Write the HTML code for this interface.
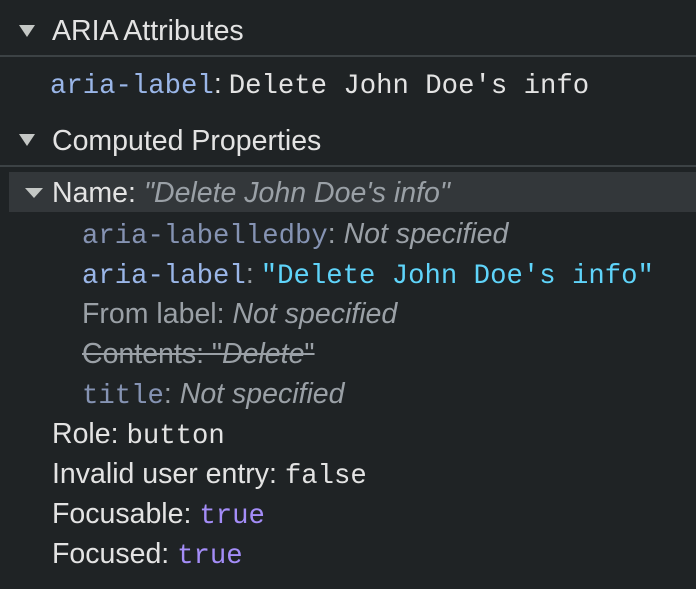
<!DOCTYPE html>
<html><head><style>
body{margin:0;width:696px;height:589px;background:#1f2325;overflow:hidden;font-family:"Liberation Sans",sans-serif;color:#e3e3e3;font-size:28.5px}
.r{position:absolute;left:0;right:0;height:40px;line-height:40px;white-space:nowrap}
.m{font-family:"Liberation Mono",monospace;font-size:27.3px}
.v{margin-left:7px}
.tri{position:absolute;width:0;height:0;border-left:8px solid transparent;border-right:8px solid transparent;border-top:12px solid #c4c7c5}
.sep{position:absolute;left:0;right:0;height:2px;background:#3c4245}
.k{color:#9ab6e8}.kd{color:#8593b3}.g{color:#9aa0a6}.c{color:#5fd4fa}.p{color:#a48df8}
i{font-style:italic}
</style></head><body>
<div class="tri" style="left:19px;top:25px"></div>
<div class="r" style="top:11px;left:52px">ARIA Attributes</div>
<div class="sep" style="top:55px"></div>
<div class="r" style="top:64px;left:50px"><span class="m k">aria-label</span>:<span class="m v">Delete John Doe's info</span></div>
<div class="tri" style="left:19px;top:134px"></div>
<div class="r" style="top:121px;left:52px">Computed Properties</div>
<div class="sep" style="top:165px"></div>
<div style="position:absolute;left:9px;right:0;top:172px;height:40px;background:#33373a"></div>
<div class="tri" style="left:25px;top:188px;border-left-width:9px;border-right-width:9px;border-top-width:10px"></div>
<div class="r" style="top:173px;left:52px">Name: <i class="g">"Delete John Doe's info"</i></div>
<div class="r" style="top:214px;left:82px"><span class="m kd">aria-labelledby</span><span class="g">: <i>Not specified</i></span></div>
<div class="r" style="top:254px;left:82px"><span class="m k">aria-label</span><span class="g">:</span><span class="m c v">"Delete John Doe's info"</span></div>
<div class="r g" style="top:294px;left:82px">From label: <i>Not specified</i></div>
<div class="r g" style="top:334px;left:82px"><s>Contents: "<i>Delete</i>"</s></div>
<div class="r" style="top:374px;left:82px"><span class="m kd">title</span><span class="g">: <i>Not specified</i></span></div>
<div class="r" style="top:414px;left:52px">Role: <span class="m">button</span></div>
<div class="r" style="top:454px;left:52px">Invalid user entry: <span class="m">false</span></div>
<div class="r" style="top:494px;left:52px">Focusable: <span class="m p">true</span></div>
<div class="r" style="top:534px;left:52px">Focused: <span class="m p">true</span></div>
</body></html>
